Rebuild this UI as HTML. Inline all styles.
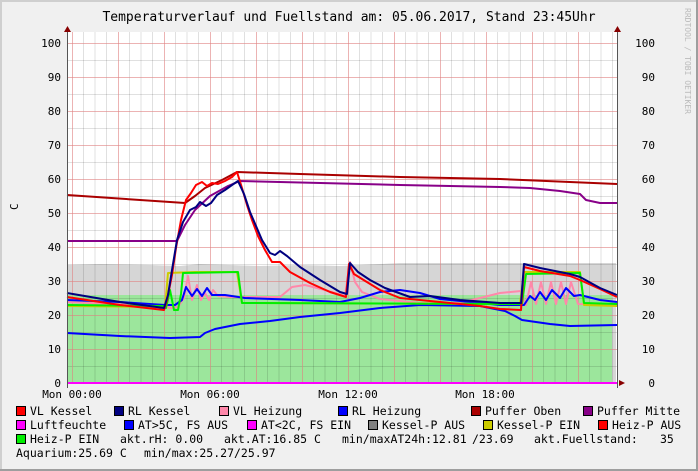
<!DOCTYPE html>
<html><head><meta charset="utf-8"><style>
html,body{margin:0;padding:0;}
body{width:698px;height:471px;overflow:hidden;background:#f0f0f0;}
svg{display:block;}
text{font-family:"DejaVu Sans Mono","Liberation Mono",monospace;}
</style></head><body>
<svg width="698" height="471" viewBox="0 0 698 471" xmlns="http://www.w3.org/2000/svg">
<rect x="0" y="0" width="698" height="471" fill="#f0f0f0"/>
<rect x="0" y="0" width="698" height="2" fill="#cfcfcf"/>
<rect x="0" y="0" width="2" height="471" fill="#cfcfcf"/>
<rect x="696" y="0" width="2" height="471" fill="#9e9e9e"/>
<rect x="0" y="469" width="698" height="2" fill="#9e9e9e"/>
<text x="349" y="21" font-size="13" text-anchor="middle" fill="#000">Temperaturverlauf und Fuellstand am: 05.06.2017, Stand 23:45Uhr</text>
<text x="0" y="0" font-size="8" fill="#bbb" transform="translate(685,8) rotate(90)">RRDTOOL / TOBI OETIKER</text>
<rect x="67" y="32" width="550" height="351" fill="#fff"/>
<!-- gray area -->
<polygon points="67,265 100,264 150,265 180,266 200,264 260,266 300,265 340,266 400,263 500,263 616,263 616,383 67,383" fill="#d6d6d6"/>
<rect x="67" y="295" width="545" height="88" fill="#9ce69c"/>
<!-- grid -->
<g stroke="#000" stroke-opacity="0.12" stroke-width="1">
<path d="M83.5 32V383M106.5 32V383M129.5 32V383M152.5 32V383M175.5 32V383M198.5 32V383M221.5 32V383M244.5 32V383M267.5 32V383M290.5 32V383M313.5 32V383M336.5 32V383M359.5 32V383M382.5 32V383M405.5 32V383M428.5 32V383M451.5 32V383M474.5 32V383M497.5 32V383M520.5 32V383M543.5 32V383M566.5 32V383M589.5 32V383M612.5 32V383"/>
<path d="M95 32V383M141 32V383M187 32V383M233 32V383M279 32V383M325 32V383M371 32V383M417 32V383M463 32V383M509 32V383M555 32V383M601 32V383" />
<path d="M67 366.5H617M67 332.5H617M67 298.5H617M67 264.5H617M67 230.5H617M67 196.5H617M67 162.5H617M67 128.5H617M67 94.5H617M67 60.5H617"/>
</g>
<g stroke="#e08080" stroke-opacity="0.6" stroke-width="1">
<path d="M72.5 32V383M118.5 32V383M164.5 32V383M210.5 32V383M256.5 32V383M302.5 32V383M348.5 32V383M394.5 32V383M440.5 32V383M486.5 32V383M532.5 32V383M578.5 32V383"/>
<path d="M67 349.5H617M67 315.5H617M67 281.5H617M67 247.5H617M67 213.5H617M67 179.5H617M67 145.5H617M67 111.5H617M67 77.5H617M67 43.5H617"/>
</g>
<g fill="none" stroke-width="2" stroke-linejoin="round">
<polyline stroke="#0000ff" points="67,333 120,336 170,338 200,337 205,333 215,329 240,324 270,321 300,317 340,313 380,308 420,305 480,306 505,311 515,316 522,320 550,324 570,326 617,325"/>
<polyline stroke="#aa0000" points="67,195 185,203 195,196 205,188 222,180 237,172 300,174 400,177 500,179 617,184"/>
<polyline stroke="#880088" points="67,241 177,241 185,225 195,210 210,196 228,186 240,181 400,185 500,187 530,188 560,191 580,194 586,200 600,203 617,203"/>
<polyline stroke="#ff88aa" points="67,302 160,306 170,308 178,307 184,298 188,276 192,300 197,285 201,300 205,293 209,300 213,290 218,296 230,297 260,297 280,297 292,287 305,285 325,290 345,296 350,262 355,282 362,292 380,299 420,303 460,303 480,298 500,293 521,291 526,305 531,282 536,304 541,282 546,304 551,282 556,304 561,282 566,304 571,282 578,304 617,305"/>
<polyline stroke="#0000ff" points="67,300 120,302 165,305 175,305 182,300 186,287 192,296 197,289 202,296 207,288 212,295 225,295 245,298 300,300 340,302 360,298 380,292 400,290 420,293 440,299 480,303 500,305 524,305 530,296 535,300 540,292 546,300 552,290 560,298 566,288 574,296 580,295 600,300 617,302"/>
<polyline stroke="#cccc00" points="67,306 160,307 165,308 168,273 195,272 237,272 242,303 520,304 524,272 580,272 584,305 617,306"/>
<polyline stroke="#00ee00" points="67,305 163,306 166,308 170,290 174,310 178,310 181,294 183,273 238,272 242,303 522,304 526,274 580,273 584,303 617,304"/>
<polyline stroke="#ff0000" points="67,297 120,305 164,310 167,300 172,275 176,248 181,220 186,200 191,193 196,185 202,182 207,186 212,183 218,184 225,181 232,177 237,172 242,188 247,205 252,220 258,236 265,250 272,262 276,262 280,262 290,272 310,283 330,292 346,297 349,264 354,274 362,279 380,290 400,298 440,302 480,306 500,309 521,310 524,267 540,271 570,276 580,280 600,289 617,297"/>
<polyline stroke="#000080" points="67,293 120,302 164,308 168,295 172,270 177,240 183,222 190,210 196,207 200,202 206,206 211,203 217,195 225,190 232,185 238,181 244,194 250,212 256,226 262,240 270,253 275,255 280,251 287,256 300,267 320,280 340,292 347,294 350,263 358,272 370,280 385,288 410,297 430,296 460,300 500,303 521,303 524,264 540,268 570,274 580,277 600,288 617,295"/>
</g>
<rect x="67" y="382" width="550" height="2" fill="#ff00ff"/>
<!-- axes -->
<line x1="67.5" y1="30" x2="67.5" y2="388" stroke="#555" stroke-width="1"/>
<line x1="617.5" y1="30" x2="617.5" y2="388" stroke="#555" stroke-width="1"/>
<polygon points="64,32 71,32 67.5,26" fill="#880000"/>
<polygon points="614,32 621,32 617.5,26" fill="#880000"/>
<polygon points="619,380 619,386 625,383" fill="#880000"/>
<g font-size="11" fill="#000" text-anchor="end">
<text x="61" y="47">100</text><text x="61" y="81">90</text><text x="61" y="115">80</text><text x="61" y="149">70</text><text x="61" y="183">60</text><text x="61" y="217">50</text><text x="61" y="251">40</text><text x="61" y="285">30</text><text x="61" y="319">20</text><text x="61" y="353">10</text><text x="61" y="387">0</text>
</g>
<g font-size="11" fill="#000" text-anchor="end">
<text x="655" y="47">100</text><text x="655" y="81">90</text><text x="655" y="115">80</text><text x="655" y="149">70</text><text x="655" y="183">60</text><text x="655" y="217">50</text><text x="655" y="251">40</text><text x="655" y="285">30</text><text x="655" y="319">20</text><text x="655" y="353">10</text><text x="655" y="387">0</text>
</g>
<text x="0" y="0" font-size="11" fill="#000" transform="translate(18,210) rotate(-90)">C</text>
<g font-size="11" fill="#000" text-anchor="middle">
<text x="72" y="398">Mon 00:00</text><text x="210" y="398">Mon 06:00</text><text x="348" y="398">Mon 12:00</text><text x="485" y="398">Mon 18:00</text>
</g>
<!-- legend -->
<g stroke="#000" stroke-width="1">
<rect x="16.5" y="406.5" width="9" height="9" fill="#ff0000"/>
<rect x="114.5" y="406.5" width="9" height="9" fill="#000080"/>
<rect x="219.5" y="406.5" width="9" height="9" fill="#ff88aa"/>
<rect x="338.5" y="406.5" width="9" height="9" fill="#0000ff"/>
<rect x="471.5" y="406.5" width="9" height="9" fill="#aa0000"/>
<rect x="583.5" y="406.5" width="9" height="9" fill="#880088"/>
<rect x="16.5" y="420.5" width="9" height="9" fill="#ff00ff"/>
<rect x="124.5" y="420.5" width="9" height="9" fill="#0000ff"/>
<rect x="247.5" y="420.5" width="9" height="9" fill="#ff00ff"/>
<rect x="368.5" y="420.5" width="9" height="9" fill="#808080"/>
<rect x="483.5" y="420.5" width="9" height="9" fill="#cccc00"/>
<rect x="598.5" y="420.5" width="9" height="9" fill="#ff0000"/>
<rect x="16.5" y="434.5" width="9" height="9" fill="#00ee00"/>
</g>
<g font-size="11.5" fill="#000" xml:space="preserve">
<text x="30" y="415">VL Kessel</text>
<text x="128" y="415">RL Kessel</text>
<text x="233" y="415">VL Heizung</text>
<text x="352" y="415">RL Heizung</text>
<text x="485" y="415">Puffer Oben</text>
<text x="597" y="415">Puffer Mitte</text>
<text x="30" y="429">Luftfeuchte</text>
<text x="138" y="429">AT&gt;5C, FS AUS</text>
<text x="261" y="429">AT&lt;2C, FS EIN</text>
<text x="382" y="429">Kessel-P AUS</text>
<text x="497" y="429">Kessel-P EIN</text>
<text x="612" y="429">Heiz-P AUS</text>
<text x="30" y="443">Heiz-P EIN</text>
<text x="120" y="443">akt.rH: 0.00</text>
<text x="224" y="443">akt.AT:16.85 C</text>
<text x="342" y="443">min/maxAT24h:12.81</text>
<text x="472" y="443">/23.69</text>
<text x="534" y="443">akt.Fuellstand:</text>
<text x="660" y="443">35</text>
<text x="16" y="457">Aquarium:25.69 C</text>
<text x="144" y="457">min/max:25.27/25.97</text>
</g>
</svg>
</body></html>
